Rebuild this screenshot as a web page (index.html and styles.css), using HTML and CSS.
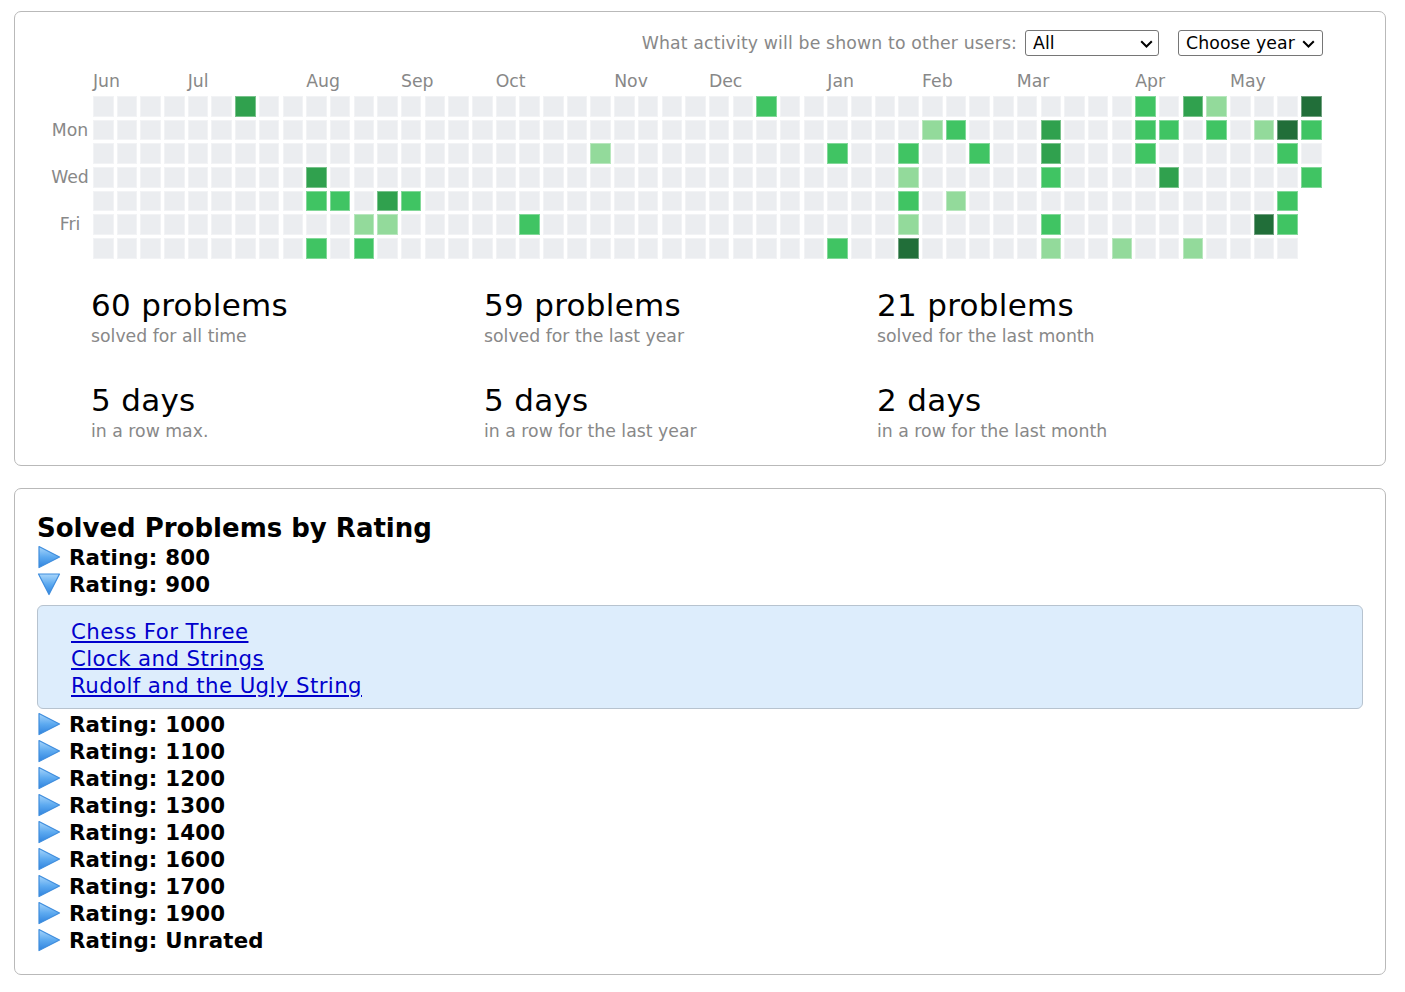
FILE: index.html
```html
<!DOCTYPE html>
<html lang="en">
<head>
<meta charset="utf-8">
<title>Activity</title>
<link rel="stylesheet" href="styles.css">
</head>
<body>
<svg class="defs" width="0" height="0" aria-hidden="true">
  <defs>
    <linearGradient id="tri-grad" x1="0" y1="0" x2="0" y2="1">
      <stop offset="0" stop-color="#a9d6fb"/>
      <stop offset="0.5" stop-color="#5daaf0"/>
      <stop offset="1" stop-color="#2f83de"/>
    </linearGradient>
  </defs>
</svg>
<div class="page">
  <section class="box activity">
    <div class="controls">
      <span class="controls-label">What activity will be shown to other users:</span>
      <span class="sel-wrap sel-wrap-all">
        <select class="sel sel-all"><option>All</option></select>
        <svg class="chev" viewBox="0 0 13 8"><path d="M1.2 1.2 L6.5 6.5 L11.8 1.2"/></svg>
      </span>
      <span class="sel-wrap sel-wrap-year">
        <select class="sel sel-year"><option>Choose year</option></select>
        <svg class="chev" viewBox="0 0 13 8"><path d="M1.2 1.2 L6.5 6.5 L11.8 1.2"/></svg>
      </span>
    </div>

    <div class="heat">
      <div class="days">
        <span></span><span>Mon</span><span></span><span>Wed</span><span></span><span>Fri</span><span></span>
      </div>
      <div class="heat-main">
        <div class="months">
          <span style="grid-column: 1 / span 4">Jun</span>
          <span style="grid-column: 5 / span 4">Jul</span>
          <span style="grid-column: 10 / span 4">Aug</span>
          <span style="grid-column: 14 / span 4">Sep</span>
          <span style="grid-column: 18 / span 4">Oct</span>
          <span style="grid-column: 23 / span 4">Nov</span>
          <span style="grid-column: 27 / span 4">Dec</span>
          <span style="grid-column: 32 / span 4">Jan</span>
          <span style="grid-column: 36 / span 4">Feb</span>
          <span style="grid-column: 40 / span 4">Mar</span>
          <span style="grid-column: 45 / span 4">Apr</span>
          <span style="grid-column: 49 / span 4">May</span>
        </div>
        <div class="cells">
          <!-- c0 --><i class="d"></i><i class="d"></i><i class="d"></i><i class="d"></i><i class="d"></i><i class="d"></i><i class="d"></i>
          <!-- c1 --><i class="d"></i><i class="d"></i><i class="d"></i><i class="d"></i><i class="d"></i><i class="d"></i><i class="d"></i>
          <!-- c2 --><i class="d"></i><i class="d"></i><i class="d"></i><i class="d"></i><i class="d"></i><i class="d"></i><i class="d"></i>
          <!-- c3 --><i class="d"></i><i class="d"></i><i class="d"></i><i class="d"></i><i class="d"></i><i class="d"></i><i class="d"></i>
          <!-- c4 --><i class="d"></i><i class="d"></i><i class="d"></i><i class="d"></i><i class="d"></i><i class="d"></i><i class="d"></i>
          <!-- c5 --><i class="d"></i><i class="d"></i><i class="d"></i><i class="d"></i><i class="d"></i><i class="d"></i><i class="d"></i>
          <!-- c6 --><i class="d l3"></i><i class="d"></i><i class="d"></i><i class="d"></i><i class="d"></i><i class="d"></i><i class="d"></i>
          <!-- c7 --><i class="d"></i><i class="d"></i><i class="d"></i><i class="d"></i><i class="d"></i><i class="d"></i><i class="d"></i>
          <!-- c8 --><i class="d"></i><i class="d"></i><i class="d"></i><i class="d"></i><i class="d"></i><i class="d"></i><i class="d"></i>
          <!-- c9 --><i class="d"></i><i class="d"></i><i class="d"></i><i class="d l3"></i><i class="d l2"></i><i class="d"></i><i class="d l2"></i>
          <!-- c10 --><i class="d"></i><i class="d"></i><i class="d"></i><i class="d"></i><i class="d l2"></i><i class="d"></i><i class="d"></i>
          <!-- c11 --><i class="d"></i><i class="d"></i><i class="d"></i><i class="d"></i><i class="d"></i><i class="d l1"></i><i class="d l2"></i>
          <!-- c12 --><i class="d"></i><i class="d"></i><i class="d"></i><i class="d"></i><i class="d l3"></i><i class="d l1"></i><i class="d"></i>
          <!-- c13 --><i class="d"></i><i class="d"></i><i class="d"></i><i class="d"></i><i class="d l2"></i><i class="d"></i><i class="d"></i>
          <!-- c14 --><i class="d"></i><i class="d"></i><i class="d"></i><i class="d"></i><i class="d"></i><i class="d"></i><i class="d"></i>
          <!-- c15 --><i class="d"></i><i class="d"></i><i class="d"></i><i class="d"></i><i class="d"></i><i class="d"></i><i class="d"></i>
          <!-- c16 --><i class="d"></i><i class="d"></i><i class="d"></i><i class="d"></i><i class="d"></i><i class="d"></i><i class="d"></i>
          <!-- c17 --><i class="d"></i><i class="d"></i><i class="d"></i><i class="d"></i><i class="d"></i><i class="d"></i><i class="d"></i>
          <!-- c18 --><i class="d"></i><i class="d"></i><i class="d"></i><i class="d"></i><i class="d"></i><i class="d l2"></i><i class="d"></i>
          <!-- c19 --><i class="d"></i><i class="d"></i><i class="d"></i><i class="d"></i><i class="d"></i><i class="d"></i><i class="d"></i>
          <!-- c20 --><i class="d"></i><i class="d"></i><i class="d"></i><i class="d"></i><i class="d"></i><i class="d"></i><i class="d"></i>
          <!-- c21 --><i class="d"></i><i class="d"></i><i class="d l1"></i><i class="d"></i><i class="d"></i><i class="d"></i><i class="d"></i>
          <!-- c22 --><i class="d"></i><i class="d"></i><i class="d"></i><i class="d"></i><i class="d"></i><i class="d"></i><i class="d"></i>
          <!-- c23 --><i class="d"></i><i class="d"></i><i class="d"></i><i class="d"></i><i class="d"></i><i class="d"></i><i class="d"></i>
          <!-- c24 --><i class="d"></i><i class="d"></i><i class="d"></i><i class="d"></i><i class="d"></i><i class="d"></i><i class="d"></i>
          <!-- c25 --><i class="d"></i><i class="d"></i><i class="d"></i><i class="d"></i><i class="d"></i><i class="d"></i><i class="d"></i>
          <!-- c26 --><i class="d"></i><i class="d"></i><i class="d"></i><i class="d"></i><i class="d"></i><i class="d"></i><i class="d"></i>
          <!-- c27 --><i class="d"></i><i class="d"></i><i class="d"></i><i class="d"></i><i class="d"></i><i class="d"></i><i class="d"></i>
          <!-- c28 --><i class="d l2"></i><i class="d"></i><i class="d"></i><i class="d"></i><i class="d"></i><i class="d"></i><i class="d"></i>
          <!-- c29 --><i class="d"></i><i class="d"></i><i class="d"></i><i class="d"></i><i class="d"></i><i class="d"></i><i class="d"></i>
          <!-- c30 --><i class="d"></i><i class="d"></i><i class="d"></i><i class="d"></i><i class="d"></i><i class="d"></i><i class="d"></i>
          <!-- c31 --><i class="d"></i><i class="d"></i><i class="d l2"></i><i class="d"></i><i class="d"></i><i class="d"></i><i class="d l2"></i>
          <!-- c32 --><i class="d"></i><i class="d"></i><i class="d"></i><i class="d"></i><i class="d"></i><i class="d"></i><i class="d"></i>
          <!-- c33 --><i class="d"></i><i class="d"></i><i class="d"></i><i class="d"></i><i class="d"></i><i class="d"></i><i class="d"></i>
          <!-- c34 --><i class="d"></i><i class="d"></i><i class="d l2"></i><i class="d l1"></i><i class="d l2"></i><i class="d l1"></i><i class="d l4"></i>
          <!-- c35 --><i class="d"></i><i class="d l1"></i><i class="d"></i><i class="d"></i><i class="d"></i><i class="d"></i><i class="d"></i>
          <!-- c36 --><i class="d"></i><i class="d l2"></i><i class="d"></i><i class="d"></i><i class="d l1"></i><i class="d"></i><i class="d"></i>
          <!-- c37 --><i class="d"></i><i class="d"></i><i class="d l2"></i><i class="d"></i><i class="d"></i><i class="d"></i><i class="d"></i>
          <!-- c38 --><i class="d"></i><i class="d"></i><i class="d"></i><i class="d"></i><i class="d"></i><i class="d"></i><i class="d"></i>
          <!-- c39 --><i class="d"></i><i class="d"></i><i class="d"></i><i class="d"></i><i class="d"></i><i class="d"></i><i class="d"></i>
          <!-- c40 --><i class="d"></i><i class="d l3"></i><i class="d l3"></i><i class="d l2"></i><i class="d"></i><i class="d l2"></i><i class="d l1"></i>
          <!-- c41 --><i class="d"></i><i class="d"></i><i class="d"></i><i class="d"></i><i class="d"></i><i class="d"></i><i class="d"></i>
          <!-- c42 --><i class="d"></i><i class="d"></i><i class="d"></i><i class="d"></i><i class="d"></i><i class="d"></i><i class="d"></i>
          <!-- c43 --><i class="d"></i><i class="d"></i><i class="d"></i><i class="d"></i><i class="d"></i><i class="d"></i><i class="d l1"></i>
          <!-- c44 --><i class="d l2"></i><i class="d l2"></i><i class="d l2"></i><i class="d"></i><i class="d"></i><i class="d"></i><i class="d"></i>
          <!-- c45 --><i class="d"></i><i class="d l2"></i><i class="d"></i><i class="d l3"></i><i class="d"></i><i class="d"></i><i class="d"></i>
          <!-- c46 --><i class="d l3"></i><i class="d"></i><i class="d"></i><i class="d"></i><i class="d"></i><i class="d"></i><i class="d l1"></i>
          <!-- c47 --><i class="d l1"></i><i class="d l2"></i><i class="d"></i><i class="d"></i><i class="d"></i><i class="d"></i><i class="d"></i>
          <!-- c48 --><i class="d"></i><i class="d"></i><i class="d"></i><i class="d"></i><i class="d"></i><i class="d"></i><i class="d"></i>
          <!-- c49 --><i class="d"></i><i class="d l1"></i><i class="d"></i><i class="d"></i><i class="d"></i><i class="d l4"></i><i class="d"></i>
          <!-- c50 --><i class="d"></i><i class="d l4"></i><i class="d l2"></i><i class="d"></i><i class="d l2"></i><i class="d l2"></i><i class="d"></i>
          <!-- c51 --><i class="d l4"></i><i class="d l2"></i><i class="d"></i><i class="d l2"></i>
        </div>
      </div>
    </div>

    <div class="stats">
      <div class="stat"><div class="stat-num">60 problems</div><div class="stat-sub">solved for all time</div></div>
      <div class="stat"><div class="stat-num">59 problems</div><div class="stat-sub">solved for the last year</div></div>
      <div class="stat"><div class="stat-num">21 problems</div><div class="stat-sub">solved for the last month</div></div>
      <div class="stat"><div class="stat-num">5 days</div><div class="stat-sub">in a row max.</div></div>
      <div class="stat"><div class="stat-num">5 days</div><div class="stat-sub">in a row for the last year</div></div>
      <div class="stat"><div class="stat-num">2 days</div><div class="stat-sub">in a row for the last month</div></div>
    </div>
  </section>

  <section class="box rating">
    <h2 class="rating-title">Solved Problems by Rating</h2>
    <div class="rating-row"><svg class="tri" viewBox="0 0 24 24"><polygon points="2,1.5 22.5,12 2,22.5"/></svg><span>Rating: 800</span></div>
    <div class="rating-row"><svg class="tri" viewBox="0 0 24 24"><polygon points="1.5,2 22.5,2 12,22.5"/></svg><span>Rating: 900</span></div>
    <div class="problem-list">
      <div><a class="problem-link" href="#">Chess For Three</a></div>
      <div><a class="problem-link" href="#">Clock and Strings</a></div>
      <div><a class="problem-link" href="#">Rudolf and the Ugly String</a></div>
    </div>
    <div class="rating-row"><svg class="tri" viewBox="0 0 24 24"><polygon points="2,1.5 22.5,12 2,22.5"/></svg><span>Rating: 1000</span></div>
    <div class="rating-row"><svg class="tri" viewBox="0 0 24 24"><polygon points="2,1.5 22.5,12 2,22.5"/></svg><span>Rating: 1100</span></div>
    <div class="rating-row"><svg class="tri" viewBox="0 0 24 24"><polygon points="2,1.5 22.5,12 2,22.5"/></svg><span>Rating: 1200</span></div>
    <div class="rating-row"><svg class="tri" viewBox="0 0 24 24"><polygon points="2,1.5 22.5,12 2,22.5"/></svg><span>Rating: 1300</span></div>
    <div class="rating-row"><svg class="tri" viewBox="0 0 24 24"><polygon points="2,1.5 22.5,12 2,22.5"/></svg><span>Rating: 1400</span></div>
    <div class="rating-row"><svg class="tri" viewBox="0 0 24 24"><polygon points="2,1.5 22.5,12 2,22.5"/></svg><span>Rating: 1600</span></div>
    <div class="rating-row"><svg class="tri" viewBox="0 0 24 24"><polygon points="2,1.5 22.5,12 2,22.5"/></svg><span>Rating: 1700</span></div>
    <div class="rating-row"><svg class="tri" viewBox="0 0 24 24"><polygon points="2,1.5 22.5,12 2,22.5"/></svg><span>Rating: 1900</span></div>
    <div class="rating-row"><svg class="tri" viewBox="0 0 24 24"><polygon points="2,1.5 22.5,12 2,22.5"/></svg><span>Rating: Unrated</span></div>
  </section>
</div>
</body>
</html>
```
FILE: styles.css
```css
html, body {
  margin: 0;
  padding: 0;
  background: #fff;
}
body {
  font-family: "DejaVu Sans", Verdana, sans-serif;
  color: #000;
}
.defs {
  display: block;
  width: 0;
  height: 0;
  overflow: hidden;
}
.page {
  width: 1372px;
  margin: 11px 0 0 14px;
}
.box {
  box-sizing: border-box;
  border: 1px solid #b9b9b9;
  border-radius: 7px;
  background: #fff;
}

/* ---------- activity box ---------- */
.activity {
  padding: 18px 62px 24px 0;
}
.controls {
  display: flex;
  justify-content: flex-end;
  align-items: center;
  height: 26px;
  font-size: 17.3px;
}
.controls-label {
  color: #888;
  margin-right: 8px;
  letter-spacing: 0.14px;
}
.sel-wrap {
  position: relative;
  display: block;
  height: 26px;
}
.sel-wrap-year {
  margin-left: 19px;
}
.sel {
  -webkit-appearance: none;
  appearance: none;
  box-sizing: border-box;
  display: block;
  height: 26px;
  font-family: "DejaVu Sans", Verdana, sans-serif;
  font-size: 17.3px;
  letter-spacing: 0.1px;
  color: #000;
  background: #fff;
  border: 1px solid #767676;
  border-radius: 3px;
  padding: 0 0 0 7px;
  margin: 0;
}
.sel-all {
  width: 134px;
}
.sel-year {
  width: 145px;
}
.chev {
  position: absolute;
  top: 10px;
  right: 6px;
  width: 13px;
  height: 8px;
  pointer-events: none;
}
.sel-wrap-year .chev {
  right: 8px;
}
.chev path {
  fill: none;
  stroke: #000;
  stroke-width: 2;
}

.heat {
  display: flex;
  padding-left: 32px;
  margin-top: 15px;
}
.days {
  width: 46px;
  margin-top: 25px;
  display: grid;
  grid-template-rows: repeat(7, 20.5px);
  row-gap: 3.2px;
  font-size: 17.3px;
  color: #888;
  text-align: center;
  line-height: 21.5px;
}
.heat-main {
  display: flex;
  flex-direction: column;
}
.months {
  display: grid;
  grid-template-columns: repeat(52, 20.5px);
  column-gap: 3.2px;
  height: 20px;
  line-height: 20px;
  font-size: 17.3px;
  color: #888;
  margin-bottom: 5px;
  white-space: nowrap;
}
.cells {
  display: grid;
  grid-template-rows: repeat(7, 20.5px);
  grid-auto-flow: column;
  grid-auto-columns: 20.5px;
  gap: 3.2px;
}
.d {
  display: block;
  background: #ebedf0;
  box-shadow: inset 0 0 0 1px rgba(255, 255, 255, 0.35);
}
.d.l1 { background: #93da9b; }
.d.l2 { background: #40c463; }
.d.l3 { background: #30a14e; }
.d.l4 { background: #216e39; }

.stats {
  display: grid;
  grid-template-columns: repeat(3, 393px);
  row-gap: 36px;
  padding-left: 76px;
  margin-top: 28px;
}
.stat-num {
  font-size: 31px;
  line-height: 36px;
  letter-spacing: 0.3px;
  color: #000;
  white-space: nowrap;
}
.stat-sub {
  font-size: 17.3px;
  line-height: 20px;
  margin-top: 3px;
  color: #888;
  white-space: nowrap;
}

/* ---------- rating box ---------- */
.rating {
  margin-top: 22px;
  padding: 24px 22px 20px;
}
.rating-title {
  margin: 0;
  font-size: 26px;
  line-height: 31px;
  font-weight: bold;
}
.rating-row {
  display: flex;
  align-items: center;
  height: 27px;
  font-size: 21.3px;
  font-weight: bold;
  line-height: 27px;
  letter-spacing: 0.2px;
}
.tri {
  width: 24px;
  height: 24px;
  margin-right: 8px;
  flex: none;
}
.tri polygon {
  fill: url(#tri-grad);
  stroke: #3f8ddd;
  stroke-width: 1.2;
  stroke-linejoin: round;
}
.problem-list {
  margin: 7px 0 2px;
  padding: 12px 0 9px 33px;
  background: #ddedfc;
  border: 1px solid #b7c3cf;
  border-radius: 6px;
  font-size: 21.3px;
  line-height: 27px;
}
.problem-link {
  color: #0000cc;
  text-decoration: underline;
  letter-spacing: 0.4px;
}
```
